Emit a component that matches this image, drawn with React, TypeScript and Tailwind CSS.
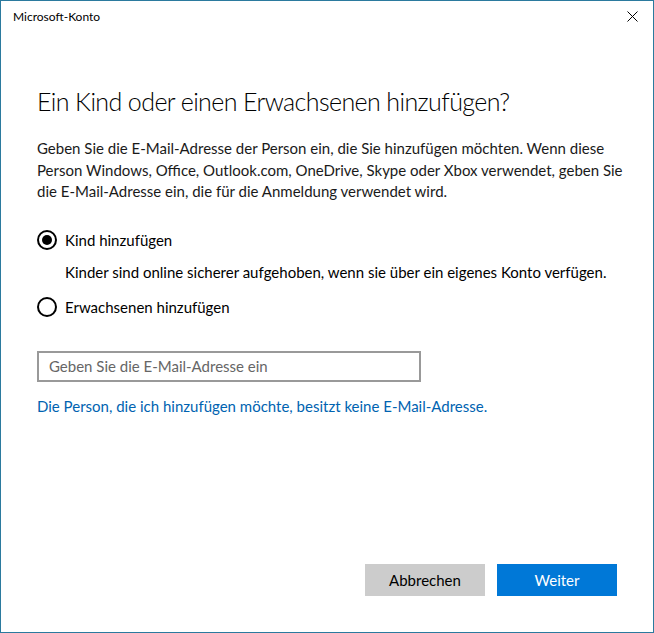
import { useState } from "react";

const font = { fontFamily: 'Lato, "Liberation Sans", sans-serif' };

const Radio = ({ checked }: { checked: boolean }) => (
  <span className="flex h-5 w-5 shrink-0 items-center justify-center rounded-full border-2 border-black">
    {checked && <span className="h-2.5 w-2.5 rounded-full bg-black" />}
  </span>
);

export default function App() {
  const [choice, setChoice] = useState<"kind" | "adult">("kind");

  return (
    <div
      className="flex h-[633px] w-[654px] flex-col border border-[#2b7a9e] bg-white text-black"
      style={font}
    >
      {/* Titelleiste */}
      <div className="flex h-[31px] items-center justify-between pl-3 pr-[15px]">
        <span className="text-[12px]">Microsoft-Konto</span>
        <svg width="11" height="11" viewBox="0 0 11 11" className="text-black">
          <path d="M0.5 0.5L10.5 10.5M10.5 0.5L0.5 10.5" stroke="currentColor" strokeWidth="1" />
        </svg>
      </div>

      <div className="flex flex-1 flex-col px-9">
        <h1 className="mt-[52px] whitespace-nowrap text-[25px] font-light leading-[34px] tracking-[-0.6px]">
          Ein Kind oder einen Erwachsenen hinzufügen?
        </h1>

        <p className="mt-[20px] whitespace-nowrap text-[15px] leading-[21.5px] text-[#1a1a1a]">
          Geben Sie die E-Mail-Adresse der Person ein, die Sie hinzufügen möchten. Wenn diese
          <br />
          Person Windows, Office, Outlook.com, OneDrive, Skype oder Xbox verwendet, geben Sie
          <br />
          die E-Mail-Adresse ein, die für die Anmeldung verwendet wird.
        </p>

        <button
          className="mt-[26px] flex items-center gap-2 text-left text-[15px]"
          onClick={() => setChoice("kind")}
        >
          <Radio checked={choice === "kind"} />
          <span>Kind hinzufügen</span>
        </button>
        <p className="mt-[11px] whitespace-nowrap pl-7 text-[15px] leading-[21px]">
          Kinder sind online sicherer aufgehoben, wenn sie über ein eigenes Konto verfügen.
        </p>
        <button
          className="mt-[13px] flex items-center gap-2 text-left text-[15px]"
          onClick={() => setChoice("adult")}
        >
          <Radio checked={choice === "adult"} />
          <span>Erwachsenen hinzufügen</span>
        </button>

        <input
          className="mt-[32px] h-[31px] w-[384px] border-2 border-[#999999] px-[10px] text-[15px] outline-none placeholder:text-[#666666]"
          placeholder="Geben Sie die E-Mail-Adresse ein"
        />

        <a className="mt-[13px] text-[15px] text-[#0063b1]" href="#">
          Die Person, die ich hinzufügen möchte, besitzt keine E-Mail-Adresse.
        </a>

        <div className="mt-auto mb-[36px] flex justify-end gap-3">
          <button className="h-8 w-[120px] bg-[#cccccc] text-[15px]">Abbrechen</button>
          <button className="h-8 w-[120px] bg-[#0078d7] text-[15px] text-white">Weiter</button>
        </div>
      </div>
    </div>
  );
}
